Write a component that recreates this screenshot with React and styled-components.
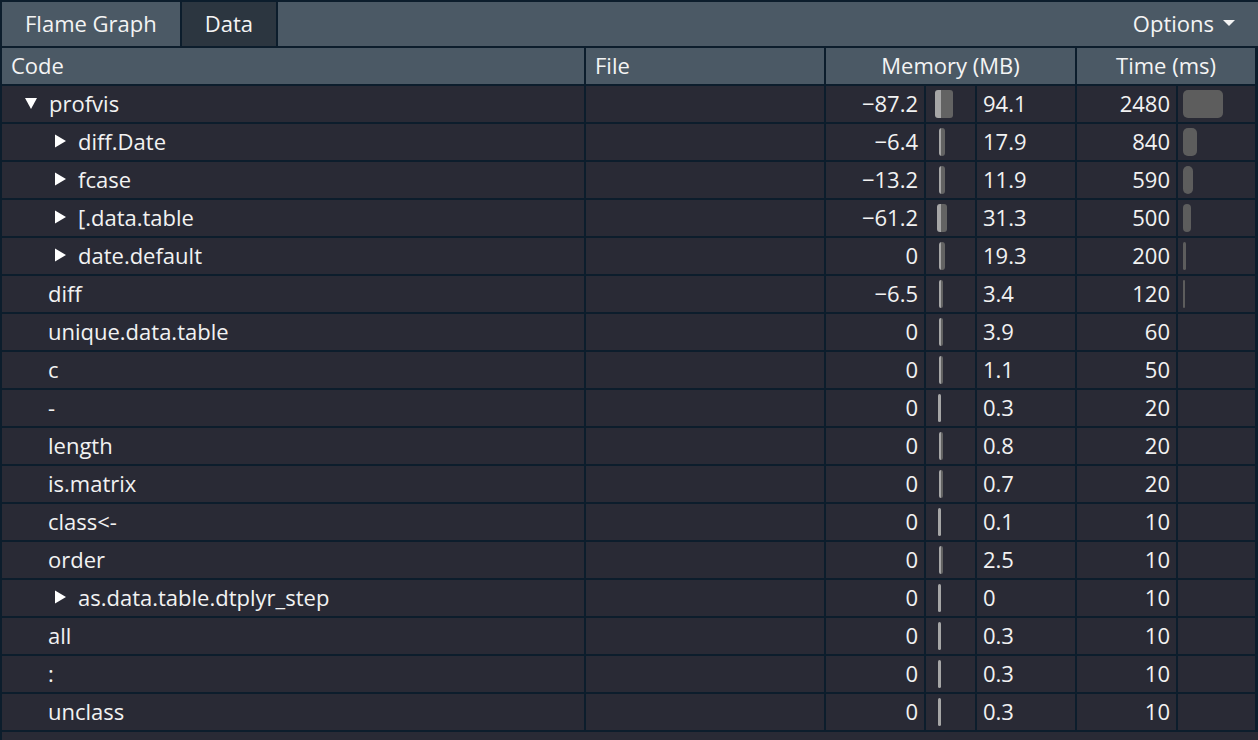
import React from "react";
import styled, { createGlobalStyle } from "styled-components";

const GlobalStyle = createGlobalStyle`
  html, body {
    margin: 0;
    padding: 0;
    background: #292a35;
    overflow: hidden;
  }
  body {
    font-family: "Open Sans", "Liberation Sans", sans-serif;
    color: #f2f2f2;
  }
`;

const Page = styled.div`
  width: 1258px;
  height: 740px;
  box-sizing: border-box;
  background: #292a35;
  border-left: 2px solid #0c1d2c;
  overflow: hidden;
`;

const TabBar = styled.div`
  display: flex;
  align-items: stretch;
  height: 44px;
  background: #4b5965;
  border-top: 2px solid #0c1d2c;
  border-bottom: 2px solid #0c1d2c;
`;

const Tab = styled.div`
  display: flex;
  align-items: center;
  padding: 0 23px 2px;
  font-size: 22px;
  background: ${(p) => (p.active ? "#2c3640" : "transparent")};
  border-right: 2px solid #0c1d2c;
  color: #f4f4f4;
`;

const Options = styled.div`
  margin-left: auto;
  display: flex;
  align-items: center;
  gap: 9px;
  padding: 0 23px 2px 0;
  font-size: 22px;
  color: #f4f4f4;
`;

const Grid = styled.div`
  display: grid;
  grid-template-columns: 582px 238px 98px 49px 98px 99px 77px;
  grid-auto-rows: 36px;
  gap: 2px;
  background: #0c1d2c;
  padding-bottom: 2px;
  width: 1256px;
`;

const HeadCell = styled.div`
  grid-column: span ${(p) => p.span || 1};
  display: flex;
  align-items: center;
  justify-content: ${(p) => (p.center ? "center" : "flex-start")};
  padding-left: ${(p) => (p.center ? "0" : "9px")};
  padding-bottom: 2px;
  background: #4b5965;
  font-size: 22px;
  color: #f4f4f4;
`;

const Cell = styled.div`
  display: flex;
  align-items: center;
  background: #292a35;
  font-size: 22px;
  color: #f2f2f2;
  min-width: 0;
`;

const CodeCell = styled(Cell)`
  padding-left: ${(p) => (p.nested ? 51 : p.arrow ? 22 : 46)}px;
  padding-bottom: 2px;
  gap: 11px;
  white-space: nowrap;
`;

const NumCell = styled(Cell)`
  justify-content: ${(p) => (p.left ? "flex-start" : "flex-end")};
  padding: 0 6px 2px;
`;

const MemBarCell = styled(Cell)`
  padding-left: 13px;
`;

const MemPair = styled.div`
  display: flex;
  height: 28px;
  border-radius: 3px;
  overflow: hidden;
`;

const MemNeg = styled.div`
  background: #a6a6a6;
`;

const MemPos = styled.div`
  background: #636363;
`;

const TimeBarCell = styled(Cell)`
  padding-left: 5px;
`;

const TimeBar = styled.div`
  height: 28px;
  background: #5d5d5d;
  border-radius: ${(p) => (p.w > 6 ? 5 : 2)}px;
`;

const Caret = () => (
  <svg width="12" height="8" viewBox="0 0 12 8">
    <path d="M0 1 L12 1 L6 7 Z" fill="#f4f4f4" />
  </svg>
);

const Arrow = ({ open }) =>
  open ? (
    <svg width="14" height="13" viewBox="0 0 14 13">
      <path d="M1 1 L13 1 L7 12 Z" fill="#ffffff" />
    </svg>
  ) : (
    <svg width="14" height="14" viewBox="0 0 14 14">
      <path d="M2 0.5 L13 7 L2 13.5 Z" fill="#ffffff" />
    </svg>
  );

const rows = [
  { name: "profvis", arrow: "open", neg: "−87.2", pos: "94.1", bar: [6, 12], time: 2480 },
  { name: "diff.Date", arrow: "closed", nested: true, neg: "−6.4", pos: "17.9", bar: [2, 4], time: 840 },
  { name: "fcase", arrow: "closed", nested: true, neg: "−13.2", pos: "11.9", bar: [2, 4], time: 590 },
  { name: "[.data.table", arrow: "closed", nested: true, neg: "−61.2", pos: "31.3", bar: [4, 6], time: 500 },
  { name: "date.default", arrow: "closed", nested: true, neg: "0", pos: "19.3", bar: [2, 4], time: 200 },
  { name: "diff", neg: "−6.5", pos: "3.4", bar: [2, 2], time: 120 },
  { name: "unique.data.table", neg: "0", pos: "3.9", bar: [2, 2], time: 60 },
  { name: "c", neg: "0", pos: "1.1", bar: [2, 2], time: 50 },
  { name: "-", neg: "0", pos: "0.3", bar: [3, 0], time: 20 },
  { name: "length", neg: "0", pos: "0.8", bar: [2, 2], time: 20 },
  { name: "is.matrix", neg: "0", pos: "0.7", bar: [2, 2], time: 20 },
  { name: "class<-", neg: "0", pos: "0.1", bar: [3, 0], time: 10 },
  { name: "order", neg: "0", pos: "2.5", bar: [2, 2], time: 10 },
  { name: "as.data.table.dtplyr_step", arrow: "closed", nested: true, neg: "0", pos: "0", bar: [3, 0], time: 10 },
  { name: "all", neg: "0", pos: "0.3", bar: [3, 0], time: 10 },
  { name: ":", neg: "0", pos: "0.3", bar: [3, 0], time: 10 },
  { name: "unclass", neg: "0", pos: "0.3", bar: [3, 0], time: 10 },
];

const maxTime = 2480;

export default function App() {
  return (
    <>
      <GlobalStyle />
      <Page>
        <TabBar>
          <Tab>Flame Graph</Tab>
          <Tab active>Data</Tab>
          <Options>
            Options <Caret />
          </Options>
        </TabBar>
        <Grid>
          <HeadCell>Code</HeadCell>
          <HeadCell>File</HeadCell>
          <HeadCell span={3} center>
            Memory (MB)
          </HeadCell>
          <HeadCell span={2} center>
            Time (ms)
          </HeadCell>
          {rows.map((r) => {
            const tw = Math.round((r.time / maxTime) * 40);
            return (
              <React.Fragment key={r.name}>
                <CodeCell arrow={!!r.arrow} nested={r.nested}>
                  {r.arrow && <Arrow open={r.arrow === "open"} />}
                  <span>{r.name}</span>
                </CodeCell>
                <Cell />
                <NumCell>{r.neg}</NumCell>
                <MemBarCell>
                  <MemPair style={{ marginLeft: 2 - r.bar[0] }}>
                    <MemNeg style={{ width: r.bar[0] }} />
                    <MemPos style={{ width: r.bar[1] }} />
                  </MemPair>
                </MemBarCell>
                <NumCell left>{r.pos}</NumCell>
                <NumCell>{r.time}</NumCell>
                <TimeBarCell>
                  {tw >= 2 && <TimeBar w={tw} style={{ width: tw }} />}
                </TimeBarCell>
              </React.Fragment>
            );
          })}
        </Grid>
      </Page>
    </>
  );
}
